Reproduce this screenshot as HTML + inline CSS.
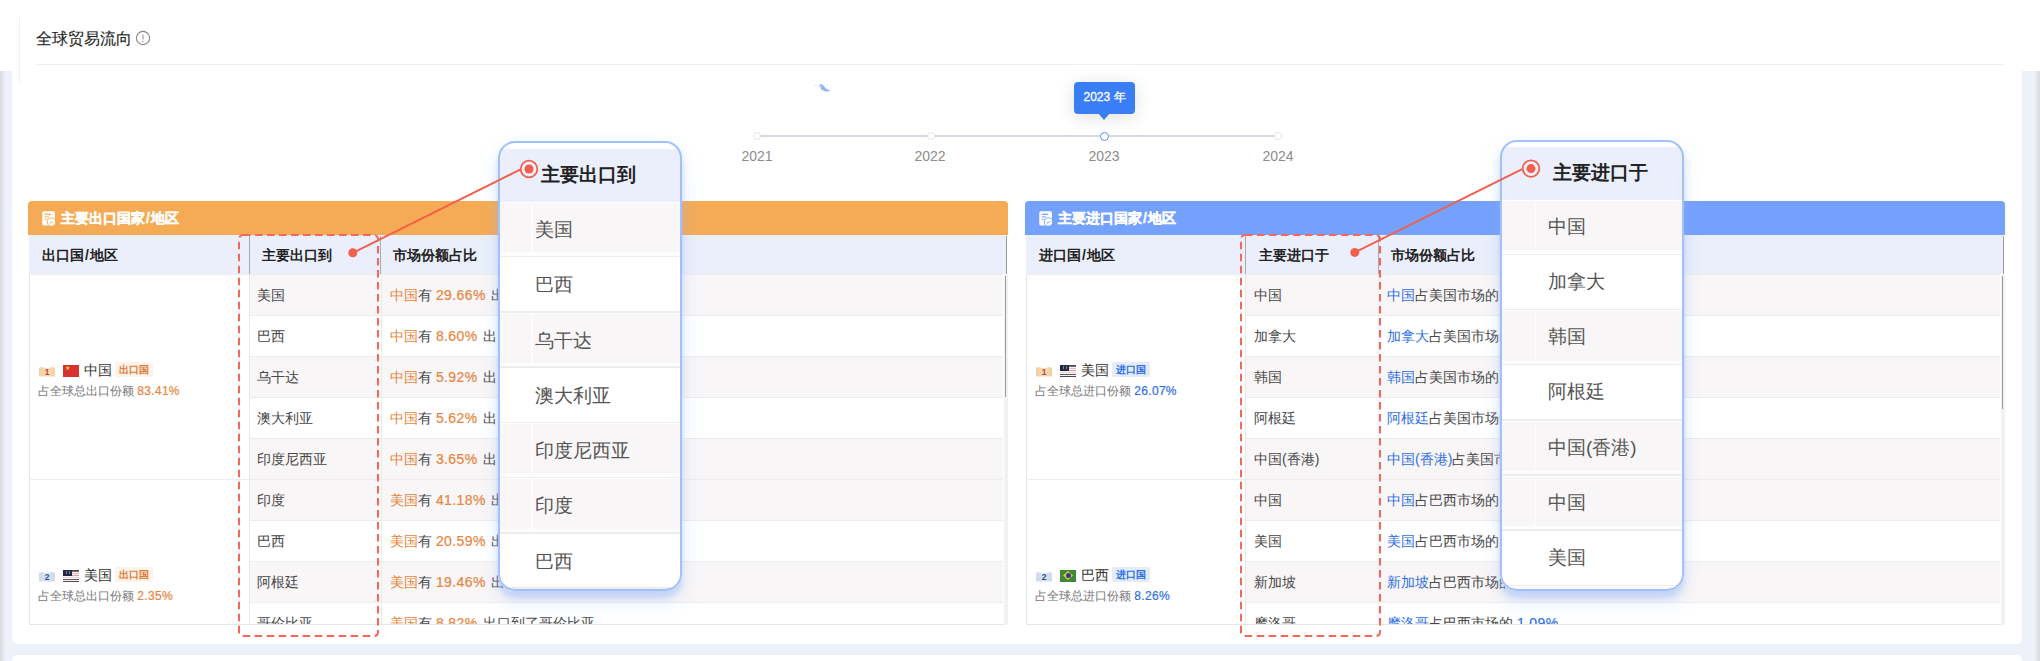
<!DOCTYPE html><html><head><meta charset="utf-8"><style>
*{box-sizing:border-box;margin:0;padding:0}
html,body{width:2040px;height:661px;overflow:hidden}
body{position:relative;background:#eef1f9;font-family:"Liberation Sans",sans-serif;color:#333}
.a{position:absolute}
.t{position:absolute;white-space:nowrap;line-height:1}
.hd{font-weight:bold;color:#222;font-size:14px}
.cell{font-size:14px;color:#474747}
.or{color:#e8853d}
.bl{color:#2f6fe4}
.num{letter-spacing:.4px;margin-right:1.5px;-webkit-text-stroke:0.2px currentColor}
</style></head><body><div class="a" style="left:0;top:71px;width:12px;height:590px;background:linear-gradient(90deg,#d8d9de 0,#e4e6eb 3px,#eef1f9 6px)"></div>
<div class="a" style="left:2022px;top:71px;width:18px;height:590px;background:linear-gradient(90deg,#eef1f9 0,#eef1f9 12px,#e4e6eb 15px,#d8d9de 18px)"></div>
<div class="a" style="left:0;top:0;width:2040px;height:71px;background:#fff"></div>
<div class="a" style="left:12px;top:0;width:2010px;height:644px;background:#fff;border-radius:0 0 5px 5px"></div>
<div class="a" style="left:12px;top:655px;width:2010px;height:30px;background:#fff;border-radius:5px"></div>
<div class="a" style="left:19px;top:17px;width:1px;height:66px;background:#eef0f6"></div>
<div class="t" style="left:36px;top:30.5px;font-size:16px;color:#262626;-webkit-text-stroke:0.15px #262626">全球贸易流向</div>
<svg class="a" style="left:135px;top:30px" width="16" height="16" viewBox="0 0 16 16"><circle cx="8" cy="8" r="6.6" fill="none" stroke="#888" stroke-width="1.1"/><line x1="8" y1="4.6" x2="8" y2="9.6" stroke="#999" stroke-width="1.1"/><circle cx="8" cy="11.4" r="0.7" fill="#888"/></svg>
<div class="a" style="left:36px;top:64px;width:1968px;height:1px;background:#eeeeee"></div>
<div class="a" style="left:757px;top:135px;width:521px;height:2px;background:#d6dae5"></div>
<div class="a" style="left:753px;top:132px;width:8px;height:8px;border-radius:50%;background:#fff;border:1.5px solid #e3e3e6"></div>
<div class="t" style="left:727px;width:60px;text-align:center;top:149px;font-size:14px;color:#8c8c8c">2021</div>
<div class="a" style="left:927px;top:132px;width:8px;height:8px;border-radius:50%;background:#fff;border:1.5px solid #e3e3e6"></div>
<div class="t" style="left:900px;width:60px;text-align:center;top:149px;font-size:14px;color:#8c8c8c">2022</div>
<div class="a" style="left:1099.5px;top:131.5px;width:9px;height:9px;border-radius:50%;background:#fff;border:1.7px solid #5b93f2"></div>
<div class="t" style="left:1074px;width:60px;text-align:center;top:149px;font-size:14px;color:#8c8c8c">2023</div>
<div class="a" style="left:1274px;top:132px;width:8px;height:8px;border-radius:50%;background:#fff;border:1.5px solid #e3e3e6"></div>
<div class="t" style="left:1248px;width:60px;text-align:center;top:149px;font-size:14px;color:#8c8c8c">2024</div>
<div class="a" style="left:1074px;top:82px;width:61px;height:32px;background:#3a7ef6;border-radius:4px;box-shadow:0 3px 18px rgba(0,0,0,0.13)"></div>
<div class="a" style="left:1098px;top:113px;width:0;height:0;border-left:6px solid transparent;border-right:6px solid transparent;border-top:7px solid #3a7ef6"></div>
<div class="t" style="left:1074px;width:61px;text-align:center;top:91px;font-size:12px;color:#fff;-webkit-text-stroke:0.3px #fff">2023 年</div>
<svg class="a" style="left:810px;top:80px" width="30" height="15" viewBox="0 0 30 15"><polygon points="10,4 12.5,4.5 16,8.5 21,11.2 15,11.5 11.2,9.5" fill="#93b7f3"/><rect x="5.5" y="5" width="1" height="1.2" fill="#b9bfd0"/><rect x="9" y="5" width="0.9" height="2" fill="#a9c6f5"/></svg>
<div class="a" style="left:28px;top:201px;width:980px;height:34px;background:#f5ab56;border-radius:4px 4px 0 0"></div>
<svg class="a" style="left:42px;top:211px" width="16" height="16" viewBox="0 0 16 16"><rect x="0.3" y="0.3" width="12.6" height="14.2" rx="1.6" fill="#fff"/><path d="M2.6 3.4h6.6" stroke="#f5ab56" stroke-width="1.3"/><path d="M2.6 5.9h4.4" stroke="#f5ab56" stroke-width="1"/><path d="M2.6 8.4h2" stroke="#f5ab56" stroke-width="1"/><circle cx="9.4" cy="11" r="4.1" fill="#fff" stroke="#f5ab56" stroke-width="0.9"/><path d="M7.6 11.2l1.4 1.1 2.2-2.2" fill="none" stroke="#f5ab56" stroke-width="1"/></svg>
<div class="t" style="left:61px;top:211px;font-size:14px;font-weight:bold;color:#fff;-webkit-text-stroke:0.35px #fff">主要出口国家<span style="margin:0 1px">/</span>地区</div>
<div class="a" style="left:29px;top:235px;width:1px;height:389px;background:#e6e6e9"></div>
<div class="a" style="left:29px;top:623.5px;width:979px;height:1px;background:#e6e6e9"></div>
<div class="a" style="left:29px;top:235px;width:977px;height:39px;background:#ebeffb"></div>
<div class="t hd" style="left:42px;top:248px">出口国<span style="margin:0 1px">/</span>地区</div>
<div class="t hd" style="left:262px;top:248px">主要出口到</div>
<div class="t hd" style="left:393px;top:248px">市场份额占比</div>
<div class="a" style="left:0;top:0;width:2040px;height:661px;clip-path:inset(274px 0 37px 0)">
<div class="a" style="left:249.5px;top:274.0px;width:753.5px;height:41.0px;background:#f9f6f7;border-top:1px solid #ededed"></div>
<div class="t cell" style="left:257px;top:287.5px">美国</div>
<div class="t cell" style="left:390px;top:287.5px"><span class="or">中国</span>有 <span class="or num">29.66%</span> 出口到了美国</div>
<div class="a" style="left:249.5px;top:315.0px;width:753.5px;height:41.0px;background:#ffffff;border-top:1px solid #ededed"></div>
<div class="t cell" style="left:257px;top:328.5px">巴西</div>
<div class="t cell" style="left:390px;top:328.5px"><span class="or">中国</span>有 <span class="or num">8.60%</span> 出口到了巴西</div>
<div class="a" style="left:249.5px;top:356.0px;width:753.5px;height:41.0px;background:#f9f6f7;border-top:1px solid #ededed"></div>
<div class="t cell" style="left:257px;top:369.5px">乌干达</div>
<div class="t cell" style="left:390px;top:369.5px"><span class="or">中国</span>有 <span class="or num">5.92%</span> 出口到了乌干达</div>
<div class="a" style="left:249.5px;top:397.0px;width:753.5px;height:41.0px;background:#ffffff;border-top:1px solid #ededed"></div>
<div class="t cell" style="left:257px;top:410.5px">澳大利亚</div>
<div class="t cell" style="left:390px;top:410.5px"><span class="or">中国</span>有 <span class="or num">5.62%</span> 出口到了澳大利亚</div>
<div class="a" style="left:249.5px;top:438.0px;width:753.5px;height:41.0px;background:#f9f6f7;border-top:1px solid #ededed"></div>
<div class="t cell" style="left:257px;top:451.5px">印度尼西亚</div>
<div class="t cell" style="left:390px;top:451.5px"><span class="or">中国</span>有 <span class="or num">3.65%</span> 出口到了印度尼西亚</div>
<div class="a" style="left:29px;top:274.0px;width:220.5px;height:205.0px;border-top:1px solid #ededed"></div>
<div class="a" style="left:39px;top:367.0px;width:16px;height:9.5px;background:linear-gradient(90deg,#f3cfa2,#f8dcb8 50%,#f3cfa2);clip-path:polygon(0 8%,20% 0,40% 12%,60% 12%,80% 0,100% 8%,100% 100%,0 100%)"></div><div class="t" style="left:39px;top:367.8px;width:16px;text-align:center;font-size:8.5px;font-weight:bold;color:#b8452c">1</div><div class="a" style="left:63px;top:364.5px;width:16px;height:12px;background:#d8322e"></div><div class="t" style="left:64.5px;top:365.0px;font-size:6px;color:#f5d23a">★</div><div class="t" style="left:84px;top:363.5px;font-size:13.5px;color:#333">中国</div><div class="a" style="left:115px;top:361.5px;width:38px;height:15px;background:#fdf3e8;border-radius:2px"></div><div class="t" style="left:115px;width:38px;text-align:center;top:365.0px;font-size:10px;font-weight:bold;color:#e07b38">出口国</div><div class="t" style="left:38px;top:384.5px;font-size:12px;color:#777">占全球总出口份额 <span class="num" style="color:#e8853d;letter-spacing:.3px">83.41%</span></div>
<div class="a" style="left:249.5px;top:479.0px;width:753.5px;height:41.0px;background:#f9f6f7;border-top:1px solid #ededed"></div>
<div class="t cell" style="left:257px;top:492.5px">印度</div>
<div class="t cell" style="left:390px;top:492.5px"><span class="or">美国</span>有 <span class="or num">41.18%</span> 出口到了印度</div>
<div class="a" style="left:249.5px;top:520.0px;width:753.5px;height:41.0px;background:#ffffff;border-top:1px solid #ededed"></div>
<div class="t cell" style="left:257px;top:533.5px">巴西</div>
<div class="t cell" style="left:390px;top:533.5px"><span class="or">美国</span>有 <span class="or num">20.59%</span> 出口到了巴西</div>
<div class="a" style="left:249.5px;top:561.0px;width:753.5px;height:41.0px;background:#f9f6f7;border-top:1px solid #ededed"></div>
<div class="t cell" style="left:257px;top:574.5px">阿根廷</div>
<div class="t cell" style="left:390px;top:574.5px"><span class="or">美国</span>有 <span class="or num">19.46%</span> 出口到了阿根廷</div>
<div class="a" style="left:249.5px;top:602.0px;width:753.5px;height:41.0px;background:#ffffff;border-top:1px solid #ededed"></div>
<div class="t cell" style="left:257px;top:615.5px">哥伦比亚</div>
<div class="t cell" style="left:390px;top:615.5px"><span class="or">美国</span>有 <span class="or num">8.82%</span> 出口到了哥伦比亚</div>
<div class="a" style="left:249.5px;top:643.0px;width:753.5px;height:41.0px;background:#f9f6f7;border-top:1px solid #ededed"></div>
<div class="t cell" style="left:257px;top:656.5px">智利</div>
<div class="t cell" style="left:390px;top:656.5px"><span class="or">美国</span>有 <span class="or num">5.88%</span> 出口到了智利</div>
<div class="a" style="left:29px;top:479.0px;width:220.5px;height:205.0px;border-top:1px solid #ededed"></div>
<div class="a" style="left:39px;top:572.0px;width:16px;height:9.5px;background:linear-gradient(90deg,#d3d9e4,#d4e2f7 50%,#d3d9e4);clip-path:polygon(0 8%,20% 0,40% 12%,60% 12%,80% 0,100% 8%,100% 100%,0 100%)"></div><div class="t" style="left:39px;top:572.8px;width:16px;text-align:center;font-size:8.5px;font-weight:bold;color:#2f4f8f">2</div><div class="a" style="left:63px;top:569.5px;width:16px;height:12.5px;background:#faf3f4"><div class="a" style="left:0;top:0.00px;width:16px;height:1px;background:#4a4a52"></div><div class="a" style="left:0;top:1.85px;width:16px;height:1px;background:#6a6a70"></div><div class="a" style="left:0;top:3.70px;width:16px;height:1px;background:#e8b9be"></div><div class="a" style="left:0;top:5.55px;width:16px;height:1px;background:#d9a0a8"></div><div class="a" style="left:0;top:7.40px;width:16px;height:1px;background:#f0d6d9"></div><div class="a" style="left:0;top:9.25px;width:16px;height:1px;background:#5a5a60"></div><div class="a" style="left:0;top:11.10px;width:16px;height:1px;background:#4a4a52"></div><div class="a" style="left:0;top:0;width:9px;height:6.5px;background:#23283f"></div><div class="a" style="left:2.5px;top:1.5px;width:1.2px;height:3px;background:#6c86c0"></div><div class="a" style="left:5.5px;top:1.5px;width:1.2px;height:3px;background:#6c86c0"></div></div><div class="t" style="left:84px;top:568.5px;font-size:13.5px;color:#333">美国</div><div class="a" style="left:115px;top:566.5px;width:38px;height:15px;background:#fdf3e8;border-radius:2px"></div><div class="t" style="left:115px;width:38px;text-align:center;top:570.0px;font-size:10px;font-weight:bold;color:#e07b38">出口国</div><div class="t" style="left:38px;top:589.5px;font-size:12px;color:#777">占全球总出口份额 <span class="num" style="color:#e8853d;letter-spacing:.3px">2.35%</span></div>
</div>
<div class="a" style="left:249.0px;top:236px;width:1px;height:38px;background:#a9abb3"></div>
<div class="a" style="left:380.0px;top:236px;width:1px;height:38px;background:#a9abb3"></div>
<div class="a" style="left:248.5px;top:274px;width:1.5px;height:350px;background:#e8e8ea"></div>
<div class="a" style="left:380.5px;top:274.5px;width:1px;height:350px;background:#ececee"></div>
<div class="a" style="left:1006px;top:236px;width:1px;height:38px;background:#9a9a9a"></div>
<div class="a" style="left:1004px;top:274.5px;width:4px;height:350px;background:#f2f2f3"></div>
<div class="a" style="left:1004.5px;top:276px;width:1.5px;height:121px;background:#9a9a9a"></div>
<div class="a" style="left:1025px;top:201px;width:980px;height:34px;background:#74a1fc;border-radius:4px 4px 0 0"></div>
<svg class="a" style="left:1039px;top:211px" width="16" height="16" viewBox="0 0 16 16"><rect x="0.3" y="0.3" width="12.6" height="14.2" rx="1.6" fill="#fff"/><path d="M2.6 3.4h6.6" stroke="#74a1fc" stroke-width="1.3"/><path d="M2.6 5.9h4.4" stroke="#74a1fc" stroke-width="1"/><path d="M2.6 8.4h2" stroke="#74a1fc" stroke-width="1"/><circle cx="9.4" cy="11" r="4.1" fill="#fff" stroke="#74a1fc" stroke-width="0.9"/><path d="M7.6 11.2l1.4 1.1 2.2-2.2" fill="none" stroke="#74a1fc" stroke-width="1"/></svg>
<div class="t" style="left:1058px;top:211px;font-size:14px;font-weight:bold;color:#fff;-webkit-text-stroke:0.35px #fff">主要进口国家<span style="margin:0 1px">/</span>地区</div>
<div class="a" style="left:1026px;top:235px;width:1px;height:389px;background:#e6e6e9"></div>
<div class="a" style="left:1026px;top:623.5px;width:979px;height:1px;background:#e6e6e9"></div>
<div class="a" style="left:1026px;top:235px;width:977px;height:39px;background:#ebeffb"></div>
<div class="t hd" style="left:1039px;top:248px">进口国<span style="margin:0 1px">/</span>地区</div>
<div class="t hd" style="left:1259px;top:248px">主要进口于</div>
<div class="t hd" style="left:1391px;top:248px">市场份额占比</div>
<div class="a" style="left:0;top:0;width:2040px;height:661px;clip-path:inset(274px 0 37px 0)">
<div class="a" style="left:1245.5px;top:274.0px;width:754.5px;height:41.0px;background:#f9f6f7;border-top:1px solid #ededed"></div>
<div class="t cell" style="left:1254px;top:287.5px">中国</div>
<div class="t cell" style="left:1387px;top:287.5px"><span class="bl">中国</span>占美国市场的 <span class="bl num">21.30%</span></div>
<div class="a" style="left:1245.5px;top:315.0px;width:754.5px;height:41.0px;background:#ffffff;border-top:1px solid #ededed"></div>
<div class="t cell" style="left:1254px;top:328.5px">加拿大</div>
<div class="t cell" style="left:1387px;top:328.5px"><span class="bl">加拿大</span>占美国市场的 <span class="bl num">14.10%</span></div>
<div class="a" style="left:1245.5px;top:356.0px;width:754.5px;height:41.0px;background:#f9f6f7;border-top:1px solid #ededed"></div>
<div class="t cell" style="left:1254px;top:369.5px">韩国</div>
<div class="t cell" style="left:1387px;top:369.5px"><span class="bl">韩国</span>占美国市场的 <span class="bl num">9.80%</span></div>
<div class="a" style="left:1245.5px;top:397.0px;width:754.5px;height:41.0px;background:#ffffff;border-top:1px solid #ededed"></div>
<div class="t cell" style="left:1254px;top:410.5px">阿根廷</div>
<div class="t cell" style="left:1387px;top:410.5px"><span class="bl">阿根廷</span>占美国市场的 <span class="bl num">6.20%</span></div>
<div class="a" style="left:1245.5px;top:438.0px;width:754.5px;height:41.0px;background:#f9f6f7;border-top:1px solid #ededed"></div>
<div class="t cell" style="left:1254px;top:451.5px">中国(香港)</div>
<div class="t cell" style="left:1387px;top:451.5px"><span class="bl">中国(香港)</span>占美国市场的 <span class="bl num">4.10%</span></div>
<div class="a" style="left:1026px;top:274.0px;width:219.5px;height:205.0px;border-top:1px solid #ededed"></div>
<div class="a" style="left:1036px;top:367.0px;width:16px;height:9.5px;background:linear-gradient(90deg,#f3cfa2,#f8dcb8 50%,#f3cfa2);clip-path:polygon(0 8%,20% 0,40% 12%,60% 12%,80% 0,100% 8%,100% 100%,0 100%)"></div><div class="t" style="left:1036px;top:367.8px;width:16px;text-align:center;font-size:8.5px;font-weight:bold;color:#b8452c">1</div><div class="a" style="left:1060px;top:364.5px;width:16px;height:12.5px;background:#faf3f4"><div class="a" style="left:0;top:0.00px;width:16px;height:1px;background:#4a4a52"></div><div class="a" style="left:0;top:1.85px;width:16px;height:1px;background:#6a6a70"></div><div class="a" style="left:0;top:3.70px;width:16px;height:1px;background:#e8b9be"></div><div class="a" style="left:0;top:5.55px;width:16px;height:1px;background:#d9a0a8"></div><div class="a" style="left:0;top:7.40px;width:16px;height:1px;background:#f0d6d9"></div><div class="a" style="left:0;top:9.25px;width:16px;height:1px;background:#5a5a60"></div><div class="a" style="left:0;top:11.10px;width:16px;height:1px;background:#4a4a52"></div><div class="a" style="left:0;top:0;width:9px;height:6.5px;background:#23283f"></div><div class="a" style="left:2.5px;top:1.5px;width:1.2px;height:3px;background:#6c86c0"></div><div class="a" style="left:5.5px;top:1.5px;width:1.2px;height:3px;background:#6c86c0"></div></div><div class="t" style="left:1081px;top:363.5px;font-size:13.5px;color:#333">美国</div><div class="a" style="left:1112px;top:361.5px;width:38px;height:15px;background:#e4ecfc;border-radius:2px"></div><div class="t" style="left:1112px;width:38px;text-align:center;top:365.0px;font-size:10px;font-weight:bold;color:#2f6fe4">进口国</div><div class="t" style="left:1035px;top:384.5px;font-size:12px;color:#777">占全球总进口份额 <span class="num" style="color:#2f6fe4;letter-spacing:.3px">26.07%</span></div>
<div class="a" style="left:1245.5px;top:479.0px;width:754.5px;height:41.0px;background:#f9f6f7;border-top:1px solid #ededed"></div>
<div class="t cell" style="left:1254px;top:492.5px">中国</div>
<div class="t cell" style="left:1387px;top:492.5px"><span class="bl">中国</span>占巴西市场的 <span class="bl num">30.10%</span></div>
<div class="a" style="left:1245.5px;top:520.0px;width:754.5px;height:41.0px;background:#ffffff;border-top:1px solid #ededed"></div>
<div class="t cell" style="left:1254px;top:533.5px">美国</div>
<div class="t cell" style="left:1387px;top:533.5px"><span class="bl">美国</span>占巴西市场的 <span class="bl num">18.20%</span></div>
<div class="a" style="left:1245.5px;top:561.0px;width:754.5px;height:41.0px;background:#f9f6f7;border-top:1px solid #ededed"></div>
<div class="t cell" style="left:1254px;top:574.5px">新加坡</div>
<div class="t cell" style="left:1387px;top:574.5px"><span class="bl">新加坡</span>占巴西市场的 <span class="bl num">7.40%</span></div>
<div class="a" style="left:1245.5px;top:602.0px;width:754.5px;height:41.0px;background:#ffffff;border-top:1px solid #ededed"></div>
<div class="t cell" style="left:1254px;top:615.5px">摩洛哥</div>
<div class="t cell" style="left:1387px;top:615.5px"><span class="bl">摩洛哥</span>占巴西市场的 <span class="bl num">1.09%</span></div>
<div class="a" style="left:1245.5px;top:643.0px;width:754.5px;height:41.0px;background:#f9f6f7;border-top:1px solid #ededed"></div>
<div class="t cell" style="left:1254px;top:656.5px">智利</div>
<div class="t cell" style="left:1387px;top:656.5px"><span class="bl">智利</span>占巴西市场的 <span class="bl num">0.90%</span></div>
<div class="a" style="left:1026px;top:479.0px;width:219.5px;height:205.0px;border-top:1px solid #ededed"></div>
<div class="a" style="left:1036px;top:572.0px;width:16px;height:9.5px;background:linear-gradient(90deg,#d3d9e4,#d4e2f7 50%,#d3d9e4);clip-path:polygon(0 8%,20% 0,40% 12%,60% 12%,80% 0,100% 8%,100% 100%,0 100%)"></div><div class="t" style="left:1036px;top:572.8px;width:16px;text-align:center;font-size:8.5px;font-weight:bold;color:#2f4f8f">2</div><div class="a" style="left:1060px;top:569.5px;width:16px;height:12px;background:#3f8a3a"><div class="a" style="left:3px;top:1.5px;width:10px;height:9px;background:#e8c93c;clip-path:polygon(50% 0,100% 50%,50% 100%,0 50%)"></div><div class="a" style="left:5.5px;top:3.5px;width:5px;height:5px;border-radius:50%;background:#2b3f8a"></div></div><div class="t" style="left:1081px;top:568.5px;font-size:13.5px;color:#333">巴西</div><div class="a" style="left:1112px;top:566.5px;width:38px;height:15px;background:#e4ecfc;border-radius:2px"></div><div class="t" style="left:1112px;width:38px;text-align:center;top:570.0px;font-size:10px;font-weight:bold;color:#2f6fe4">进口国</div><div class="t" style="left:1035px;top:589.5px;font-size:12px;color:#777">占全球总进口份额 <span class="num" style="color:#2f6fe4;letter-spacing:.3px">8.26%</span></div>
</div>
<div class="a" style="left:1245.0px;top:236px;width:1px;height:38px;background:#a9abb3"></div>
<div class="a" style="left:1377.5px;top:236px;width:1px;height:38px;background:#a9abb3"></div>
<div class="a" style="left:1244.5px;top:274px;width:1.5px;height:350px;background:#e8e8ea"></div>
<div class="a" style="left:1378px;top:274.5px;width:1px;height:350px;background:#ececee"></div>
<div class="a" style="left:2003px;top:236px;width:1px;height:38px;background:#9a9a9a"></div>
<div class="a" style="left:2001px;top:274.5px;width:4px;height:350px;background:#f2f2f3"></div>
<div class="a" style="left:2001.5px;top:276px;width:1.5px;height:133px;background:#9a9a9a"></div>
<svg class="a" style="left:0;top:0" width="2040" height="661" viewBox="0 0 2040 661"><rect x="239" y="235" width="139" height="401" rx="4" fill="none" stroke="#f5675a" stroke-width="2" stroke-dasharray="7.6 4.4"/><rect x="1241" y="235" width="139" height="401" rx="4" fill="none" stroke="#f5675a" stroke-width="2" stroke-dasharray="7.6 4.4"/></svg>
<div class="a" style="left:497.5px;top:140.5px;width:184.0px;height:450.5px;border-radius:17px;box-shadow:0 7px 5px rgba(150,185,250,0.38), 0 11px 20px rgba(150,185,250,0.28), 0 0 8px rgba(150,185,250,0.08);background:#fff"></div><div class="a" style="left:497.5px;top:140.5px;width:184.0px;height:450.5px;border-radius:17px;overflow:hidden;background:#fff"><div class="a" style="left:0;top:8.5px;width:184.0px;height:53px;background:#ebeffb"></div><div class="t" style="left:43.5px;top:24.5px;font-size:19px;font-weight:bold;color:#222">主要出口到</div><div class="a" style="left:0;top:61.5px;width:184.0px;height:55.25px;background:#f9f6f7"></div><div class="a" style="left:0;top:61.5px;width:184.0px;height:1.2px;background:#fff"></div><div class="a" style="left:0;top:111.95px;width:184.0px;height:3.3px;background:rgba(255,255,255,0.75)"></div><div class="a" style="left:0;top:115.25px;width:184.0px;height:1.5px;background:#ededed"></div><div class="a" style="left:33.5px;top:61.5px;width:1.5px;height:50.25px;background:rgba(255,255,255,0.7)"></div><div class="t" style="left:37.5px;top:79.5px;font-size:19px;color:#555">美国</div><div class="a" style="left:0;top:116.75px;width:184.0px;height:55.25px;background:#ffffff"></div><div class="a" style="left:0;top:116.75px;width:184.0px;height:1.2px;background:#fff"></div><div class="a" style="left:0;top:167.2px;width:184.0px;height:3.3px;background:rgba(255,255,255,0.75)"></div><div class="a" style="left:0;top:170.5px;width:184.0px;height:1.5px;background:#ededed"></div><div class="a" style="left:33.5px;top:116.75px;width:1.5px;height:50.25px;background:rgba(255,255,255,0.7)"></div><div class="t" style="left:37.5px;top:134.75px;font-size:19px;color:#555">巴西</div><div class="a" style="left:0;top:172.0px;width:184.0px;height:55.25px;background:#f9f6f7"></div><div class="a" style="left:0;top:172.0px;width:184.0px;height:1.2px;background:#fff"></div><div class="a" style="left:0;top:222.45px;width:184.0px;height:3.3px;background:rgba(255,255,255,0.75)"></div><div class="a" style="left:0;top:225.75px;width:184.0px;height:1.5px;background:#ededed"></div><div class="a" style="left:33.5px;top:172.0px;width:1.5px;height:50.25px;background:rgba(255,255,255,0.7)"></div><div class="t" style="left:37.5px;top:190.0px;font-size:19px;color:#555">乌干达</div><div class="a" style="left:0;top:227.25px;width:184.0px;height:55.25px;background:#ffffff"></div><div class="a" style="left:0;top:227.25px;width:184.0px;height:1.2px;background:#fff"></div><div class="a" style="left:0;top:277.7px;width:184.0px;height:3.3px;background:rgba(255,255,255,0.75)"></div><div class="a" style="left:0;top:281.0px;width:184.0px;height:1.5px;background:#ededed"></div><div class="a" style="left:33.5px;top:227.25px;width:1.5px;height:50.25px;background:rgba(255,255,255,0.7)"></div><div class="t" style="left:37.5px;top:245.25px;font-size:19px;color:#555">澳大利亚</div><div class="a" style="left:0;top:282.5px;width:184.0px;height:55.25px;background:#f9f6f7"></div><div class="a" style="left:0;top:282.5px;width:184.0px;height:1.2px;background:#fff"></div><div class="a" style="left:0;top:332.95px;width:184.0px;height:3.3px;background:rgba(255,255,255,0.75)"></div><div class="a" style="left:0;top:336.25px;width:184.0px;height:1.5px;background:#ededed"></div><div class="a" style="left:33.5px;top:282.5px;width:1.5px;height:50.25px;background:rgba(255,255,255,0.7)"></div><div class="t" style="left:37.5px;top:300.5px;font-size:19px;color:#555">印度尼西亚</div><div class="a" style="left:0;top:337.75px;width:184.0px;height:55.25px;background:#f9f6f7"></div><div class="a" style="left:0;top:337.75px;width:184.0px;height:1.2px;background:#fff"></div><div class="a" style="left:0;top:388.2px;width:184.0px;height:3.3px;background:rgba(255,255,255,0.75)"></div><div class="a" style="left:0;top:391.5px;width:184.0px;height:1.5px;background:#ededed"></div><div class="a" style="left:33.5px;top:337.75px;width:1.5px;height:50.25px;background:rgba(255,255,255,0.7)"></div><div class="t" style="left:37.5px;top:355.75px;font-size:19px;color:#555">印度</div><div class="a" style="left:0;top:393.0px;width:184.0px;height:55.25px;background:#ffffff"></div><div class="a" style="left:0;top:393.0px;width:184.0px;height:1.2px;background:#fff"></div><div class="a" style="left:0;top:443.45px;width:184.0px;height:3.3px;background:rgba(255,255,255,0.75)"></div><div class="a" style="left:0;top:446.75px;width:184.0px;height:1.5px;background:#ededed"></div><div class="a" style="left:33.5px;top:393.0px;width:1.5px;height:50.25px;background:rgba(255,255,255,0.7)"></div><div class="t" style="left:37.5px;top:411.0px;font-size:19px;color:#555">巴西</div><div class="a" style="left:0;top:448.25px;width:184.0px;height:55.25px;background:#f9f6f7"></div><div class="a" style="left:0;top:448.25px;width:184.0px;height:1.2px;background:#fff"></div><div class="a" style="left:0;top:498.7px;width:184.0px;height:3.3px;background:rgba(255,255,255,0.75)"></div><div class="a" style="left:0;top:502.0px;width:184.0px;height:1.5px;background:#ededed"></div><div class="a" style="left:33.5px;top:448.25px;width:1.5px;height:50.25px;background:rgba(255,255,255,0.7)"></div><div class="t" style="left:37.5px;top:466.25px;font-size:19px;color:#555">阿根廷</div></div><div class="a" style="left:497.5px;top:140.5px;width:184.0px;height:450.5px;border-radius:17px;border:2px solid #a0c1fc"></div>
<div class="a" style="left:1500px;top:140px;width:183.5px;height:451px;border-radius:17px;box-shadow:0 7px 5px rgba(150,185,250,0.38), 0 11px 20px rgba(150,185,250,0.28), 0 0 8px rgba(150,185,250,0.08);background:#fff"></div><div class="a" style="left:1500px;top:140px;width:183.5px;height:451px;border-radius:17px;overflow:hidden;background:#fff"><div class="a" style="left:0;top:7px;width:183.5px;height:53px;background:#ebeffb"></div><div class="t" style="left:53px;top:23px;font-size:19px;font-weight:bold;color:#222">主要进口于</div><div class="a" style="left:0;top:60px;width:183.5px;height:55.15px;background:#f9f6f7"></div><div class="a" style="left:0;top:60px;width:183.5px;height:1.2px;background:#fff"></div><div class="a" style="left:0;top:110.35000000000001px;width:183.5px;height:3.3px;background:rgba(255,255,255,0.75)"></div><div class="a" style="left:0;top:113.65px;width:183.5px;height:1.5px;background:#ededed"></div><div class="a" style="left:34.5px;top:60px;width:1.5px;height:50.15px;background:rgba(255,255,255,0.7)"></div><div class="t" style="left:48px;top:77px;font-size:19px;color:#555">中国</div><div class="a" style="left:0;top:115.15px;width:183.5px;height:55.15px;background:#ffffff"></div><div class="a" style="left:0;top:115.15px;width:183.5px;height:1.2px;background:#fff"></div><div class="a" style="left:0;top:165.5px;width:183.5px;height:3.3px;background:rgba(255,255,255,0.75)"></div><div class="a" style="left:0;top:168.8px;width:183.5px;height:1.5px;background:#ededed"></div><div class="a" style="left:34.5px;top:115.15px;width:1.5px;height:50.15px;background:rgba(255,255,255,0.7)"></div><div class="t" style="left:48px;top:132.15px;font-size:19px;color:#555">加拿大</div><div class="a" style="left:0;top:170.3px;width:183.5px;height:55.15px;background:#f9f6f7"></div><div class="a" style="left:0;top:170.3px;width:183.5px;height:1.2px;background:#fff"></div><div class="a" style="left:0;top:220.65px;width:183.5px;height:3.3px;background:rgba(255,255,255,0.75)"></div><div class="a" style="left:0;top:223.95000000000002px;width:183.5px;height:1.5px;background:#ededed"></div><div class="a" style="left:34.5px;top:170.3px;width:1.5px;height:50.15px;background:rgba(255,255,255,0.7)"></div><div class="t" style="left:48px;top:187.3px;font-size:19px;color:#555">韩国</div><div class="a" style="left:0;top:225.45px;width:183.5px;height:55.15px;background:#ffffff"></div><div class="a" style="left:0;top:225.45px;width:183.5px;height:1.2px;background:#fff"></div><div class="a" style="left:0;top:275.79999999999995px;width:183.5px;height:3.3px;background:rgba(255,255,255,0.75)"></div><div class="a" style="left:0;top:279.09999999999997px;width:183.5px;height:1.5px;background:#ededed"></div><div class="a" style="left:34.5px;top:225.45px;width:1.5px;height:50.15px;background:rgba(255,255,255,0.7)"></div><div class="t" style="left:48px;top:242.45px;font-size:19px;color:#555">阿根廷</div><div class="a" style="left:0;top:280.59999999999997px;width:183.5px;height:55.15px;background:#f9f6f7"></div><div class="a" style="left:0;top:280.59999999999997px;width:183.5px;height:1.2px;background:#fff"></div><div class="a" style="left:0;top:330.94999999999993px;width:183.5px;height:3.3px;background:rgba(255,255,255,0.75)"></div><div class="a" style="left:0;top:334.24999999999994px;width:183.5px;height:1.5px;background:#ededed"></div><div class="a" style="left:34.5px;top:280.59999999999997px;width:1.5px;height:50.15px;background:rgba(255,255,255,0.7)"></div><div class="t" style="left:48px;top:297.59999999999997px;font-size:19px;color:#555">中国(香港)</div><div class="a" style="left:0;top:335.74999999999994px;width:183.5px;height:55.15px;background:#f9f6f7"></div><div class="a" style="left:0;top:335.74999999999994px;width:183.5px;height:1.2px;background:#fff"></div><div class="a" style="left:0;top:386.0999999999999px;width:183.5px;height:3.3px;background:rgba(255,255,255,0.75)"></div><div class="a" style="left:0;top:389.3999999999999px;width:183.5px;height:1.5px;background:#ededed"></div><div class="a" style="left:34.5px;top:335.74999999999994px;width:1.5px;height:50.15px;background:rgba(255,255,255,0.7)"></div><div class="t" style="left:48px;top:352.74999999999994px;font-size:19px;color:#555">中国</div><div class="a" style="left:0;top:390.9px;width:183.5px;height:55.15px;background:#ffffff"></div><div class="a" style="left:0;top:390.9px;width:183.5px;height:1.2px;background:#fff"></div><div class="a" style="left:0;top:441.24999999999994px;width:183.5px;height:3.3px;background:rgba(255,255,255,0.75)"></div><div class="a" style="left:0;top:444.54999999999995px;width:183.5px;height:1.5px;background:#ededed"></div><div class="a" style="left:34.5px;top:390.9px;width:1.5px;height:50.15px;background:rgba(255,255,255,0.7)"></div><div class="t" style="left:48px;top:407.9px;font-size:19px;color:#555">美国</div><div class="a" style="left:0;top:446.04999999999995px;width:183.5px;height:55.15px;background:#f9f6f7"></div><div class="a" style="left:0;top:446.04999999999995px;width:183.5px;height:1.2px;background:#fff"></div><div class="a" style="left:0;top:496.3999999999999px;width:183.5px;height:3.3px;background:rgba(255,255,255,0.75)"></div><div class="a" style="left:0;top:499.69999999999993px;width:183.5px;height:1.5px;background:#ededed"></div><div class="a" style="left:34.5px;top:446.04999999999995px;width:1.5px;height:50.15px;background:rgba(255,255,255,0.7)"></div><div class="t" style="left:48px;top:463.04999999999995px;font-size:19px;color:#555">新加坡</div></div><div class="a" style="left:1500px;top:140px;width:183.5px;height:451px;border-radius:17px;border:2px solid #a0c1fc"></div>
<svg class="a" style="left:0;top:0" width="2040" height="661" viewBox="0 0 2040 661"><line x1="352.8" y1="252.8" x2="520.20" y2="169.60" stroke="#f2604b" stroke-width="1.9"/><circle cx="352.8" cy="252.8" r="4.5" fill="#f2604b"/><circle cx="529" cy="169" r="8.3" fill="none" stroke="#f2604b" stroke-width="1.8"/><circle cx="529" cy="169" r="4.5" fill="#f2604b"/><line x1="1354.8" y1="252.4" x2="1522.20" y2="169.20" stroke="#f2604b" stroke-width="1.9"/><circle cx="1354.8" cy="252.4" r="4.5" fill="#f2604b"/><circle cx="1531" cy="168.6" r="8.3" fill="none" stroke="#f2604b" stroke-width="1.8"/><circle cx="1531" cy="168.6" r="4.5" fill="#f2604b"/></svg></body></html>
